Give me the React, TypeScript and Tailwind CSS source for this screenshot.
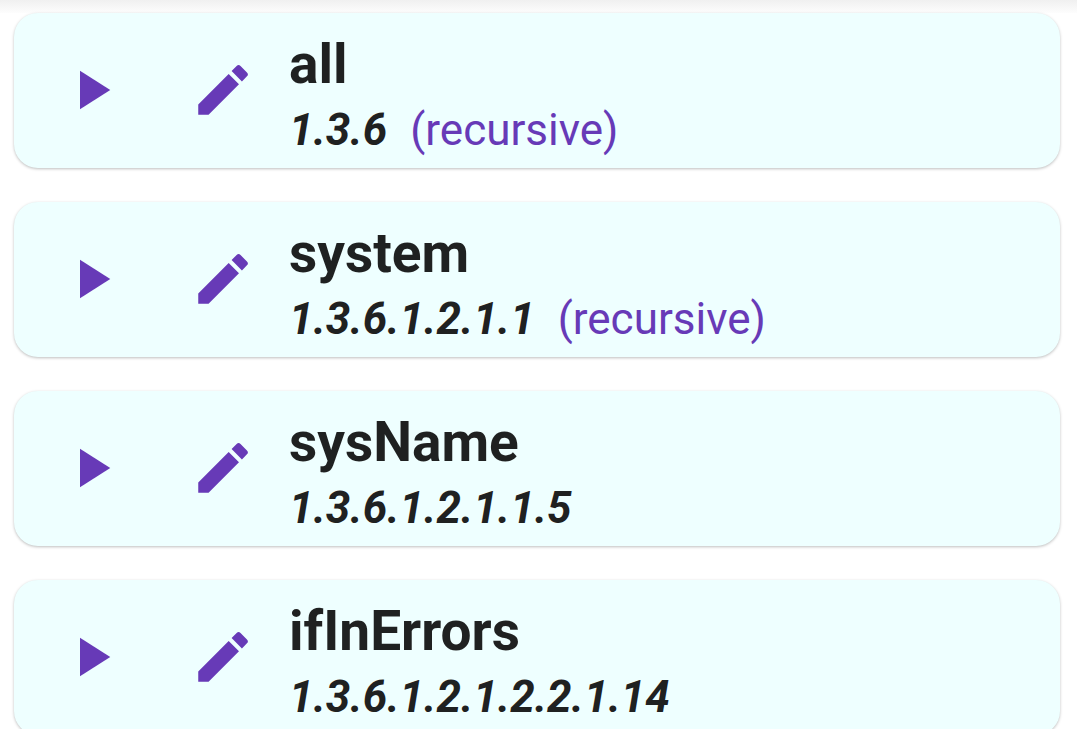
type Entry = { name: string; oid: string; recursive?: boolean };

const entries: Entry[] = [
  { name: "all", oid: "1.3.6", recursive: true },
  { name: "system", oid: "1.3.6.1.2.1.1", recursive: true },
  { name: "sysName", oid: "1.3.6.1.2.1.1.5" },
  { name: "ifInErrors", oid: "1.3.6.1.2.1.2.2.1.14" },
];

function PlayIcon() {
  return (
    <svg viewBox="0 0 24 24" className="size-[66px]" fill="currentColor" aria-hidden="true">
      <path d="M8 5v14l11-7z" />
    </svg>
  );
}

function PencilIcon() {
  return (
    <svg viewBox="0 0 24 24" className="size-[66px]" fill="currentColor" aria-hidden="true">
      <path d="M3 17.25V21h3.75L17.81 9.94l-3.75-3.75L3 17.25zM20.71 7.04a1 1 0 0 0 0-1.41l-2.34-2.34a1 1 0 0 0-1.41 0l-1.83 1.83 3.75 3.75 1.83-1.83z" />
    </svg>
  );
}

function EntryCard({ name, oid, recursive }: Entry) {
  return (
    <li className="flex min-h-[155px] items-center rounded-3xl bg-[#eeffff] pb-0.5 pl-11 shadow-[0_1px_3px_rgba(0,0,0,0.26)]">
      <button type="button" aria-label={`Run ${name}`} className="shrink-0 text-[#673ab7]">
        <PlayIcon />
      </button>
      <button type="button" aria-label={`Edit ${name}`} className="ml-[66px] shrink-0 text-[#673ab7]">
        <PencilIcon />
      </button>
      <div className="ml-[33px] min-w-0 pt-3">
        <h2 className="text-[55px] leading-[68px] font-bold">{name}</h2>
        <p className="flex gap-[23px] text-[44px] leading-[64px]">
          <span className="font-bold italic">{oid}</span>
          {recursive && <span className="text-[#673ab7]">(recursive)</span>}
        </p>
      </div>
    </li>
  );
}

export default function App() {
  return (
    <main className="h-screen overflow-hidden bg-white font-['Roboto',sans-serif] text-[#1f2121]">
      <div className="h-[13px] bg-linear-to-b from-[#f0f0f0] to-[#fdfdfd]" />
      <ul className="flex flex-col gap-[34px] pr-[17px] pl-[14px]">
        {entries.map((entry) => (
          <EntryCard key={entry.oid} {...entry} />
        ))}
      </ul>
    </main>
  );
}
